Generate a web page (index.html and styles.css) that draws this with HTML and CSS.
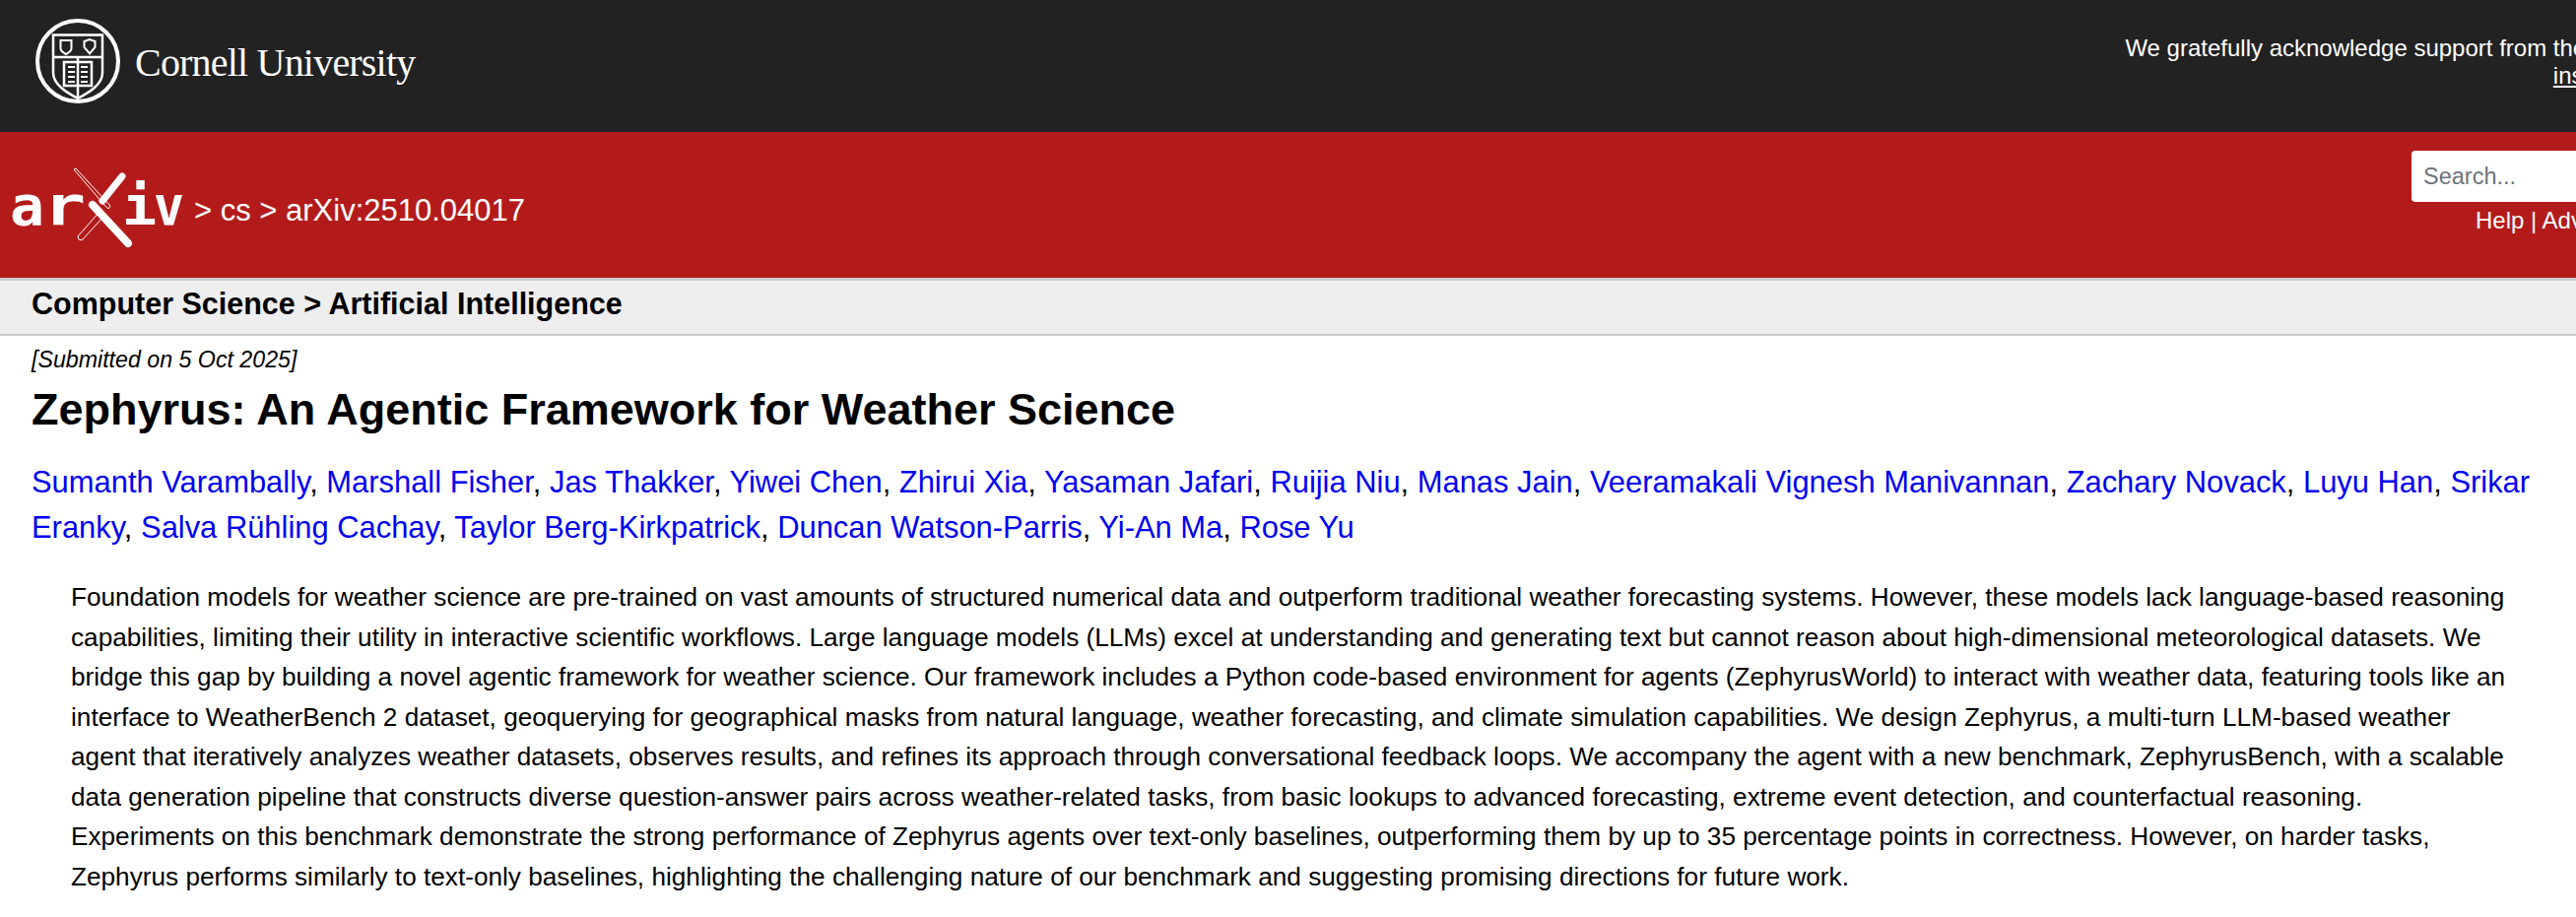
FILE: index.html
```html
<!DOCTYPE html>
<html lang="en">
<head>
  <meta charset="UTF-8">
  <title>Zephyrus: An Agentic Framework for Weather Science</title>
  <link rel="stylesheet" href="styles.css">
</head>
<body>
  <div class="page">
    <header class="top-bar">
      <a class="cornell" href="#">
        <svg class="seal" viewBox="35 18 88 88" width="88" height="88" fill="none" stroke="#fff" stroke-width="2.500">
          <circle cx="79" cy="62" r="41" stroke-width="4"/>
          <path d="M54 35.500H104V74C104 86 90 94 79 100C68 94 54 86 54 74Z"/>
          <path d="M54 58H104M79 58V100"/>
          <path d="M61.500 41H72.500V49C72.500 52 69 54 67 55C65 54 61.500 52 61.500 49Z" stroke-width="2"/>
          <path d="M85.500 42L91 40L96.500 42V48L91 54.500L85.500 48Z" stroke-width="2"/>
          <path d="M65 63H93V87H65Z"/>
          <path d="M69 68H76M69 73H76M69 78H76M69 83H76M82 68H89M82 73H89M82 78H89M82 83H89" stroke-width="2"/>
        </svg>
        <span class="cornell-name">Cornell University</span>
      </a>
      <div class="support">We gratefully acknowledge support from the Simons Foundation, <a href="#">member institutions</a><span class="support-tail">, and all contributors.</span></div>
    </header>

    <div class="red-bar">
      <div class="trail">
        <svg class="arxiv-logo" viewBox="0 0 190 90" width="190" height="90" role="img" aria-label="arXiv">
          <g class="logo-letters">
            <text x="7" y="63" textLength="35" lengthAdjust="spacingAndGlyphs">a</text>
            <text x="41" y="63" textLength="43" lengthAdjust="spacingAndGlyphs">r</text>
            <text x="121" y="63" textLength="35" lengthAdjust="spacingAndGlyphs">i</text>
            <text x="153" y="63" textLength="31" lengthAdjust="spacingAndGlyphs">v</text>
          </g>
          <path d="M121 14L101 39" stroke="#fff" stroke-width="7" stroke-linecap="round"/>
          <path d="M91 43L127 82" stroke="#fff" stroke-width="8" stroke-linecap="round"/>
          <path d="M72 7L74 6L109 44L107 47L102 42ZM104 53L80 79L77 78L76 75L98 50" fill="none" stroke="#fff" stroke-width="1"/>
        </svg>
        <span class="crumbs">&gt; <a href="#">cs</a> &gt; arXiv:2510.04017</span>
      </div>
      <div class="search">
        <input class="search-input" type="text" placeholder="Search...">
        <div class="search-links"><a href="#">Help</a> | <a href="#">Advanced Search</a></div>
      </div>
    </div>

    <div class="subject">Computer Science &gt; Artificial Intelligence</div>

    <main class="paper">
      <div class="dateline">[Submitted on 5 Oct 2025]</div>
      <h1 class="title">Zephyrus: An Agentic Framework for Weather Science</h1>
      <div class="authors">
        <a href="#">Sumanth Varambally</a>, <a href="#">Marshall Fisher</a>, <a href="#">Jas Thakker</a>, <a href="#">Yiwei Chen</a>, <a href="#">Zhirui Xia</a>, <a href="#">Yasaman Jafari</a>, <a href="#">Ruijia Niu</a>, <a href="#">Manas Jain</a>, <a href="#">Veeramakali Vignesh Manivannan</a>, <a href="#">Zachary Novack</a>, <a href="#">Luyu Han</a>, <a href="#">Srikar Eranky</a>, <a href="#">Salva Rühling Cachay</a>, <a href="#">Taylor Berg-Kirkpatrick</a>, <a href="#">Duncan Watson-Parris</a>, <a href="#">Yi-An Ma</a>, <a href="#">Rose Yu</a>
      </div>
      <blockquote class="abstract">Foundation models for weather science are pre-trained on vast amounts of structured numerical data and outperform traditional weather forecasting systems. However, these models lack language-based reasoning<br>
capabilities, limiting their utility in interactive scientific workflows. Large language models (LLMs) excel at understanding and generating text but cannot reason about high-dimensional meteorological datasets. We<br>
bridge this gap by building a novel agentic framework for weather science. Our framework includes a Python code-based environment for agents (ZephyrusWorld) to interact with weather data, featuring tools like an<br>
interface to WeatherBench 2 dataset, geoquerying for geographical masks from natural language, weather forecasting, and climate simulation capabilities. We design Zephyrus, a multi-turn LLM-based weather<br>
agent that iteratively analyzes weather datasets, observes results, and refines its approach through conversational feedback loops. We accompany the agent with a new benchmark, ZephyrusBench, with a scalable<br>
data generation pipeline that constructs diverse question-answer pairs across weather-related tasks, from basic lookups to advanced forecasting, extreme event detection, and counterfactual reasoning.<br>
Experiments on this benchmark demonstrate the strong performance of Zephyrus agents over text-only baselines, outperforming them by up to 35 percentage points in correctness. However, on harder tasks,<br>
Zephyrus performs similarly to text-only baselines, highlighting the challenging nature of our benchmark and suggesting promising directions for future work.</blockquote>
    </main>
  </div>
</body>
</html>
```

FILE: styles.css
```css
html, body {
  margin: 0;
  padding: 0;
  height: 931px;
  overflow: hidden;
  background: #fff;
}
.page {
  width: 2960px;
  font-family: "Liberation Sans", Arial, sans-serif;
  color: #000;
}
a {
  color: inherit;
  text-decoration: none;
}

.top-bar {
  height: 134px;
  background: #222;
  color: #fff;
  display: flex;
  justify-content: space-between;
  box-sizing: border-box;
  padding: 18px 20px 0 35px;
}
.cornell {
  display: flex;
  align-items: flex-start;
}
.seal {
  flex: none;
}
.cornell-name {
  font-family: "Liberation Serif", serif;
  font-size: 40px;
  letter-spacing: -0.8px;
  line-height: 44px;
  margin: 24px 0 0 14px;
}
.support {
  width: 800px;
  margin-top: 17px;
  font-size: 24px;
  line-height: 28px;
  text-align: right;
}
.support a {
  text-decoration: underline;
}
.support-tail {
  padding-right: 12px;
}

.red-bar {
  height: 148px;
  background: #b31b1b;
  color: #fff;
  border-bottom: 3px solid #ccc;
  display: flex;
  justify-content: space-between;
  padding-right: 125px;
}
.trail {
  display: flex;
  align-items: flex-start;
}
.arxiv-logo {
  flex: none;
  margin: 31px 0 0 3px;
}
.logo-letters {
  font-family: "DejaVu Sans Mono", monospace;
  font-weight: bold;
  font-size: 56px;
  fill: #fff;
}
.crumbs {
  font-size: 31px;
  line-height: 36px;
  margin: 62px 0 0 4px;
}
.search {
  width: 387px;
  padding-top: 19px;
  text-align: center;
}
.search-input {
  display: block;
  width: 100%;
  height: 52px;
  box-sizing: border-box;
  border: 0;
  border-radius: 4px;
  padding: 0 12px;
  font-family: inherit;
  font-size: 23.500px;
  background: #fff;
}
.search-input::placeholder {
  color: #6c757d;
  opacity: 1;
}
.search-links {
  font-size: 24px;
  line-height: 28px;
  margin-top: 5px;
}

.subject {
  height: 56px;
  box-sizing: border-box;
  background: #eee;
  border-bottom: 2px solid #ccc;
  padding: 0 32px;
  font-size: 30.500px;
  font-weight: bold;
  line-height: 47px;
}

.paper {
  width: 2575px;
  box-sizing: border-box;
  padding: 0 0 0 32px;
}
.dateline {
  font-size: 23.200px;
  font-style: italic;
  line-height: 26px;
  margin-top: 11px;
}
.title {
  margin: 13px 0 0;
  font-size: 45px;
  font-weight: bold;
  line-height: 50px;
}
.authors {
  margin-top: 26px;
  font-size: 30.900px;
  line-height: 46px;
}
.authors a {
  color: #00e;
}
.abstract {
  margin: 27px 0 0 40px;
  font-size: 26.200px;
  line-height: 40.500px;
  white-space: nowrap;
}
```
